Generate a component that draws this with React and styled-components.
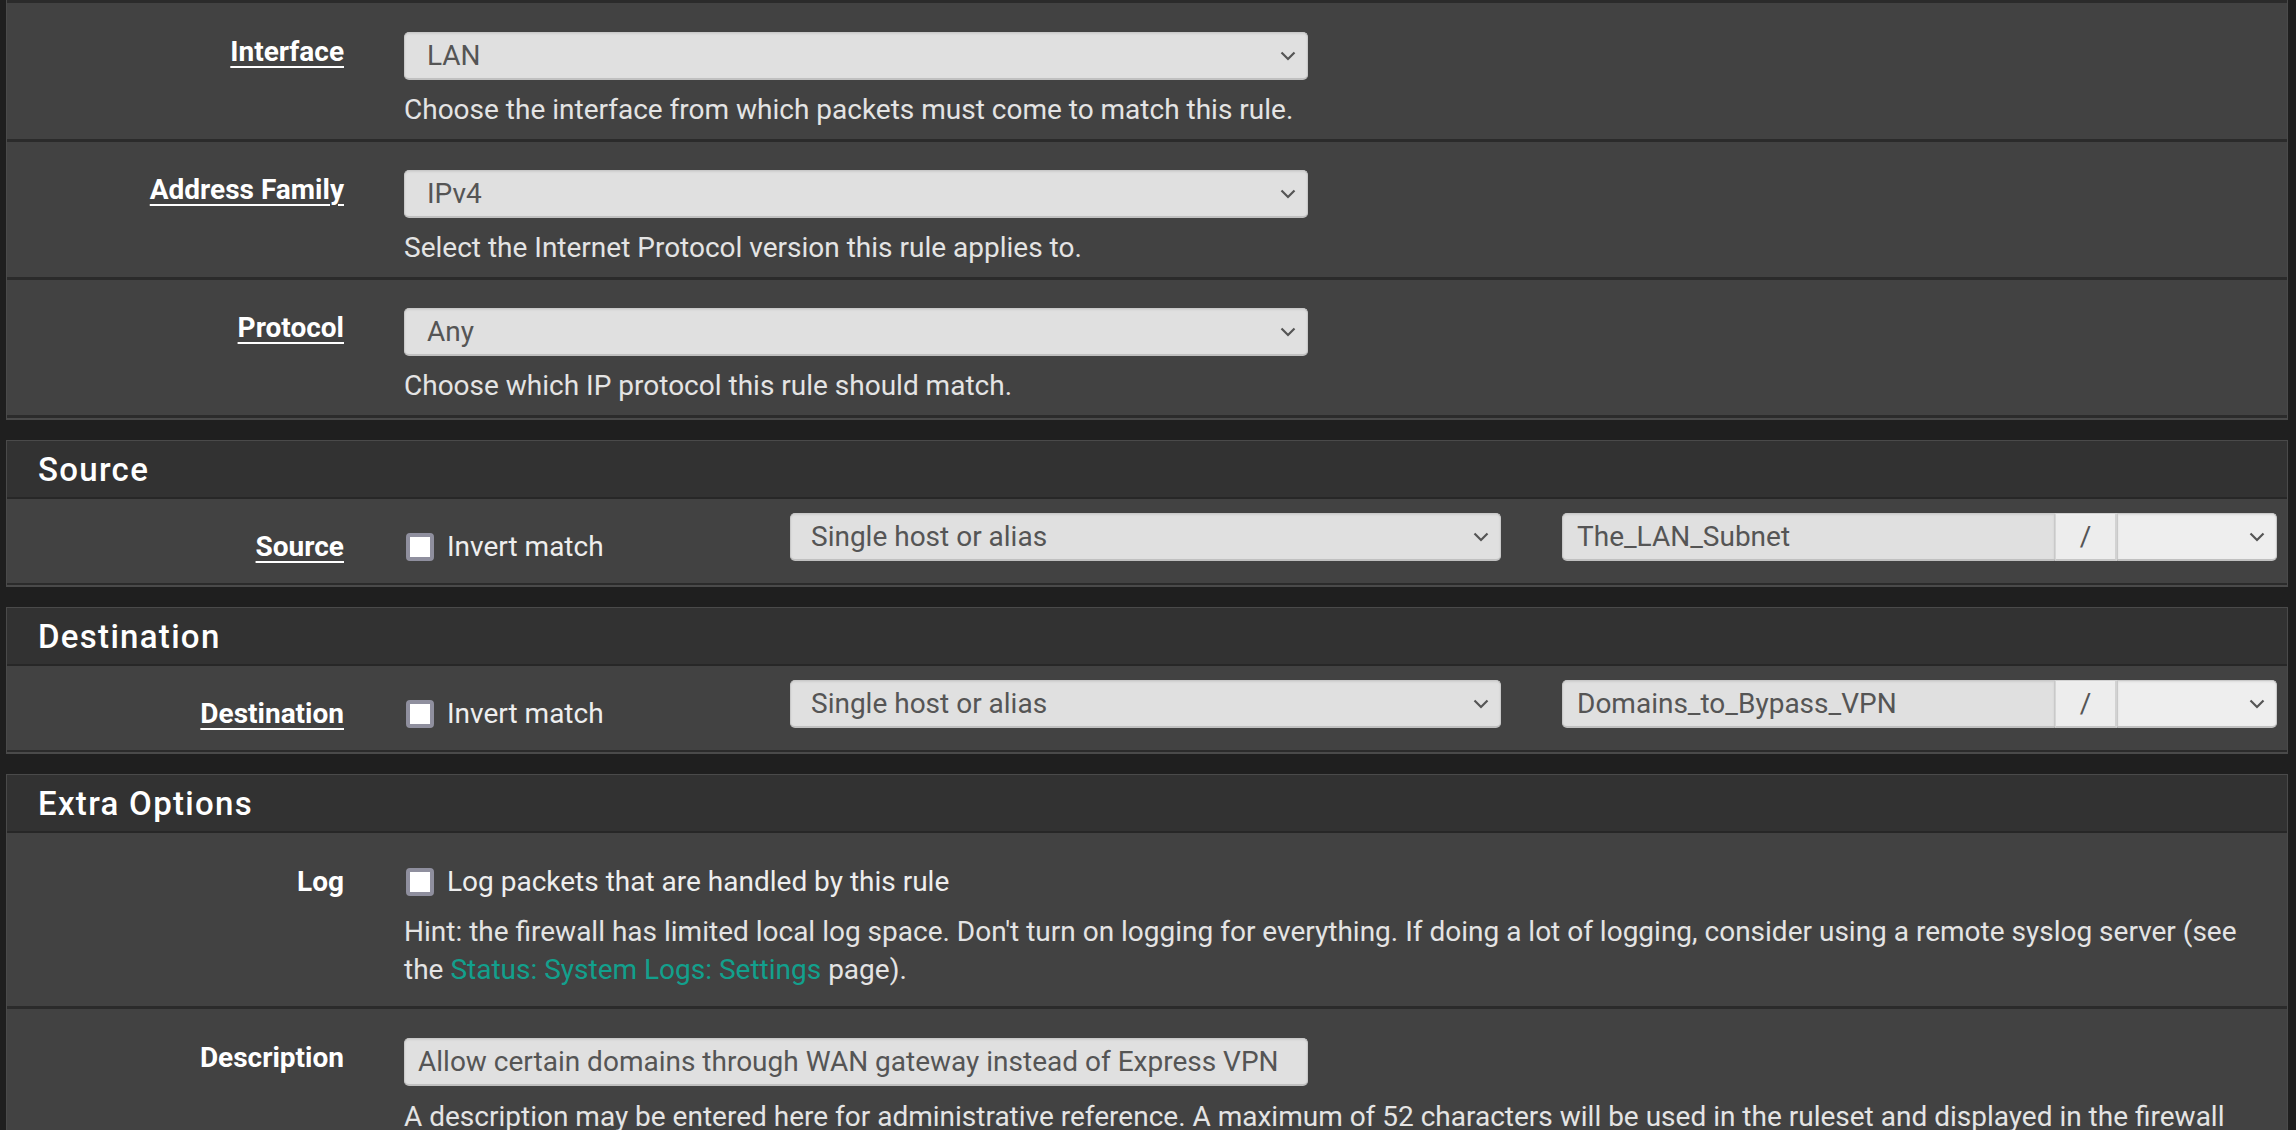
import React from "react"
import styled, { createGlobalStyle } from "styled-components"

const GlobalStyle = createGlobalStyle`
    html, body {
        margin:0;
        padding:0;
        overflow:hidden;
        background:#1f1f1f;
    }
    body {
        font-family:Roboto, "Liberation Sans", sans-serif;
        font-size:28px;
        color:#e4e4e4;
    }
`

const Page = styled.div`
    display:flex;
    flex-direction:column;
    gap:20px;
    padding:0 8px 0 6px;
`

const Panel = styled.section`
    background:#424242;
    border:1px solid #4a4a4a;
    border-bottom-width:2px;
    ${p => p.$open && "border-top:none;"}
`

const PanelHeading = styled.div`
    height:56px;
    display:flex;
    align-items:center;
    padding-left:31px;
    background:#323232;
    border-bottom:2px solid #272727;
    color:#fff;
    font-size:33px;
    font-weight:500;
    letter-spacing:1.3px;
`

const Row = styled.div`
    display:flex;
    align-items:flex-start;
    padding:${p => p.$pt}px 29px ${p => p.$pb}px 0;
    border-bottom:${p => p.$bb || 3}px solid #2b2b2b;
    ${p => p.$rule && "border-top:3px solid #2b2b2b;"}
`

const Label = styled.div`
    flex:0 0 337px;
    margin-right:60px;
    padding-top:${p => p.$offset || 0}px;
    margin-bottom:${p => -(p.$offset || 0)}px;
    text-align:right;
    line-height:40px;
    font-weight:700;
    color:#fff;

    span {
        text-decoration:${p => (p.$link ? "underline" : "none")};
        text-decoration-thickness:2px;
        text-underline-offset:5px;
    }
`

const Content = styled.div`
    flex:1;
    min-width:0;
`

const Help = styled.p`
    margin:${p => p.$mt || 11}px 0 0;
    line-height:38px;
    color:#e4e4e4;
`

const Link = styled.a`
    color:#12a08d;
    text-decoration:none;
`

const Field = styled.div`
    box-sizing:border-box;
    height:48px;
    width:${p => p.$w ? p.$w + "px" : "auto"};
    display:flex;
    align-items:center;
    justify-content:space-between;
    padding:0 ${p => p.$pr || 11}px 0 ${p => p.$pl || 22}px;
    background:${p => p.$bg || "#e0e0e0"};
    border:1px solid #c9c9c9;
    border-bottom:2px solid #c0c0c0;
    border-radius:${p => p.$radius || "5px"};
    box-shadow:inset 0 1px 2px rgba(0,0,0,0.08);
    color:#555;
    white-space:nowrap;
`

const Check = styled.label`
    display:flex;
    align-items:center;
    gap:13px;
    height:40px;
    margin-top:${p => p.$offset || 0}px;
    color:#eee;
    line-height:40px;
`

const Box = styled.span`
    box-sizing:border-box;
    width:28px;
    height:28px;
    margin-left:2px;
    flex:none;
    background:#fff;
    border:4px solid #8f8f9e;
    border-radius:4px;
`

const Triple = styled.div`
    display:grid;
    grid-template-columns:325px 711px 715px;
    grid-template-rows:48px;
    column-gap:61px;
    align-items:start;
`

const Group = styled.div`
    display:flex;
`

const Addon = styled.div`
    box-sizing:border-box;
    width:62px;
    height:48px;
    display:flex;
    align-items:center;
    justify-content:center;
    background:#ededed;
    border-top:1px solid #d2d2d2;
    border-bottom:2px solid #c6c6c6;
    border-left:1px solid #d6d6d6;
    border-right:2px solid #d2d2d2;
    color:#555;
`

function Chevron() {
    return (
        <svg width="16" height="10" viewBox="0 0 16 10">
            <polyline points="1.5,1.5 8,8 14.5,1.5" fill="none" stroke="#555" strokeWidth="2.2" />
        </svg>
    )
}

function Select({ value, w, radius, bg, pl }) {
    return (
        <Field $w={w} $radius={radius} $bg={bg} $pl={pl}>
            <span>{value}</span>
            <Chevron />
        </Field>
    )
}

const general = [
    { label: "Interface", value: "LAN", help: "Choose the interface from which packets must come to match this rule." },
    { label: "Address Family", value: "IPv4", help: "Select the Internet Protocol version this rule applies to." },
    { label: "Protocol", value: "Any", help: "Choose which IP protocol this rule should match." },
]

function HostPanel({ title, alias }) {
    return (
        <Panel>
            <PanelHeading>{title}</PanelHeading>
            <Row $pt={14} $pb={22} $bb={2}>
                <Label $link $offset={14}><span>{title}</span></Label>
                <Content>
                    <Triple>
                        <Check $offset={14}><Box />Invert match</Check>
                        <Select value="Single host or alias" pl={20} />
                        <Group>
                            <Field $radius="5px 0 0 5px" $pl={14} style={{ flex: 1 }}>
                                <span>{alias}</span>
                            </Field>
                            <Addon>/</Addon>
                            <Select value="" w={160} radius="0 5px 5px 0" bg="#eeeeee" />
                        </Group>
                    </Triple>
                </Content>
            </Row>
        </Panel>
    )
}

export default function App() {
    return (
        <>
            <GlobalStyle />
            <Page>
                <Panel $open>
                    {general.map((r, i) => (
                        <Row key={r.label} $rule={i === 0} $pt={29 - (i ? 1 : 0)} $pb={10}>
                            <Label $link><span>{r.label}</span></Label>
                            <Content>
                                <Select value={r.value} w={904} />
                                <Help>{r.help}</Help>
                            </Content>
                        </Row>
                    ))}
                </Panel>

                <HostPanel title="Source" alias="The_LAN_Subnet" />
                <HostPanel title="Destination" alias="Domains_to_Bypass_VPN" />

                <Panel>
                    <PanelHeading>Extra Options</PanelHeading>
                    <Row $pt={29} $pb={17}>
                        <Label><span>Log</span></Label>
                        <Content>
                            <Check><Box />Log packets that are handled by this rule</Check>
                            <Help>
                                Hint: the firewall has limited local log space. Don't turn on logging for everything. If doing a lot of logging, consider using a remote syslog server (see the <Link href="#">Status: System Logs: Settings</Link> page).
                            </Help>
                        </Content>
                    </Row>
                    <Row $pt={29} $pb={17}>
                        <Label><span>Description</span></Label>
                        <Content>
                            <Field $w={904} $pl={13}>
                                <span>Allow certain domains through WAN gateway instead of Express VPN</span>
                            </Field>
                            <Help $mt={12}>
                                A description may be entered here for administrative reference. A maximum of 52 characters will be used in the ruleset and displayed in the firewall log.
                            </Help>
                        </Content>
                    </Row>
                </Panel>
            </Page>
        </>
    )
}
